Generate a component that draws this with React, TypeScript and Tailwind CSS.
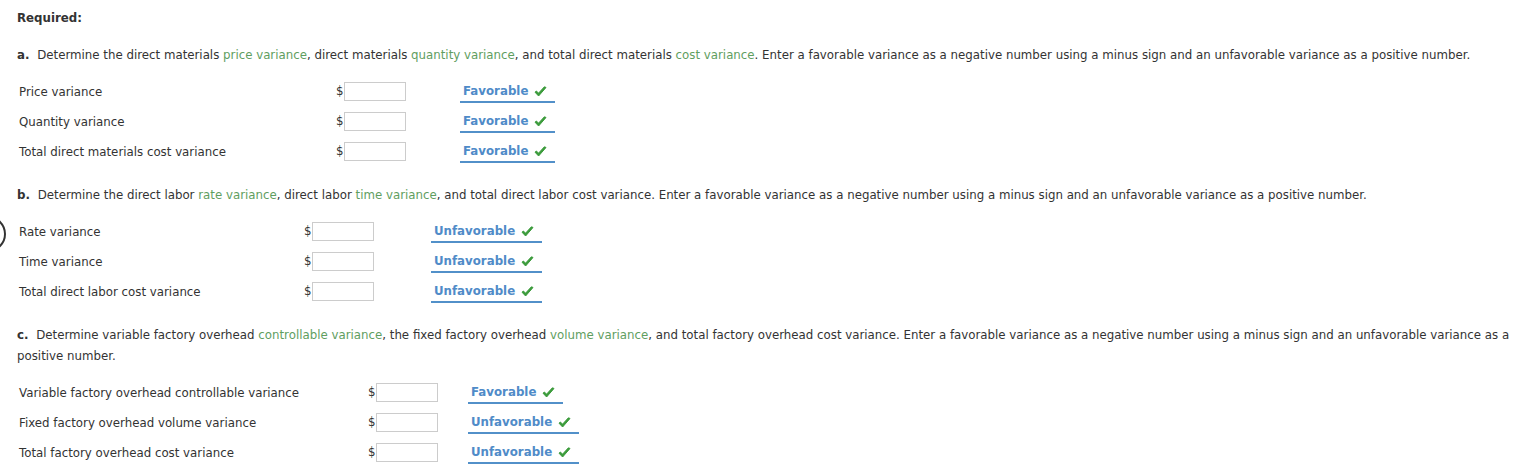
import React from 'react';

type Row = { label: string; result: 'Favorable' | 'Unfavorable' };

interface Section {
  letter: string;
  parts: { text: string; hl?: boolean }[];
  labelWidth: string;
  gapWidth: string;
  rows: Row[];
}

const sections: Section[] = [
  {
    letter: 'a.',
    parts: [
      { text: 'Determine the direct materials ' },
      { text: 'price variance', hl: true },
      { text: ', direct materials ' },
      { text: 'quantity variance', hl: true },
      { text: ', and total direct materials ' },
      { text: 'cost variance', hl: true },
      {
        text: '. Enter a favorable variance as a negative number using a minus sign and an unfavorable variance as a positive number.',
      },
    ],
    labelWidth: 'w-[317px]',
    gapWidth: 'w-[54px]',
    rows: [
      { label: 'Price variance', result: 'Favorable' },
      { label: 'Quantity variance', result: 'Favorable' },
      { label: 'Total direct materials cost variance', result: 'Favorable' },
    ],
  },
  {
    letter: 'b.',
    parts: [
      { text: 'Determine the direct labor ' },
      { text: 'rate variance', hl: true },
      { text: ', direct labor ' },
      { text: 'time variance', hl: true },
      {
        text: ', and total direct labor cost variance. Enter a favorable variance as a negative number using a minus sign and an unfavorable variance as a positive number.',
      },
    ],
    labelWidth: 'w-[285px]',
    gapWidth: 'w-[57px]',
    rows: [
      { label: 'Rate variance', result: 'Unfavorable' },
      { label: 'Time variance', result: 'Unfavorable' },
      { label: 'Total direct labor cost variance', result: 'Unfavorable' },
    ],
  },
  {
    letter: 'c.',
    parts: [
      { text: 'Determine variable factory overhead ' },
      { text: 'controllable variance', hl: true },
      { text: ', the fixed factory overhead ' },
      { text: 'volume variance', hl: true },
      {
        text: ', and total factory overhead cost variance. Enter a favorable variance as a negative number using a minus sign and an unfavorable variance as a positive number.',
      },
    ],
    labelWidth: 'w-[349px]',
    gapWidth: 'w-[30px]',
    rows: [
      { label: 'Variable factory overhead controllable variance', result: 'Favorable' },
      { label: 'Fixed factory overhead volume variance', result: 'Unfavorable' },
      { label: 'Total factory overhead cost variance', result: 'Unfavorable' },
    ],
  },
];

function Check() {
  return (
    <svg width="13" height="12" viewBox="0 0 13 12" className="shrink-0">
      <path d="M1 6.2 L4.6 10 L12 1.5 L10.4 0.8 L4.5 7.2 L2.4 5 Z" fill="#3b9b3b" stroke="#3b9b3b" strokeWidth="1" strokeLinejoin="round" />
    </svg>
  );
}

function AnswerRow({ row, section }: { row: Row; section: Section }) {
  return (
    <div className="flex h-[30px] items-start pl-[2px]">
      <div className={`${section.labelWidth} shrink-0 pt-[6px] leading-[18px]`}>{row.label}</div>
      <div className="flex shrink-0 items-start pt-[5px]">
        <span className="w-[8px] leading-[19px]">$</span>
        <div className="h-[19px] w-[62px] border border-[#cccccc] bg-white" />
      </div>
      <div className={`${section.gapWidth} shrink-0`} />
      <div
        className={`${row.result === 'Favorable' ? 'w-[95px]' : 'w-[111px]'} mt-[4px] flex h-[22px] shrink-0 items-center gap-[6px] border-b-2 border-[#5290c9] pl-[3px] pt-[1px]`}
      >
        <span className="font-bold text-[#4f8bc8]">{row.result}</span>
        <Check />
      </div>
    </div>
  );
}

export default function App() {
  return (
    <div
      className="relative min-h-[473px] overflow-hidden bg-white pl-[17px] pr-[12px] pt-[9px] text-[11.8px] text-[#333333]"
      style={{ fontFamily: '"DejaVu Sans", Verdana, sans-serif' }}
    >
      {/* partial circle on the left edge */}
      <div className="absolute left-[-32px] top-[216px] h-[36px] w-[38px] rounded-full border-2 border-[#333333]" />

      <div className="font-bold leading-[18px]">Required:</div>

      {sections.map((section) => (
        <div key={section.letter}>
          <p className="mt-[18px] mb-[11px] leading-[21px]">
            <span className="mr-[4px] font-bold">{section.letter}</span>{' '}
            {section.parts.map((p, i) =>
              p.hl ? (
                <span key={i} className="text-[#5f9e5f]">
                  {p.text}
                </span>
              ) : (
                <span key={i}>{p.text}</span>
              )
            )}
          </p>
          {section.rows.map((row) => (
            <AnswerRow key={row.label} row={row} section={section} />
          ))}
        </div>
      ))}
    </div>
  );
}
